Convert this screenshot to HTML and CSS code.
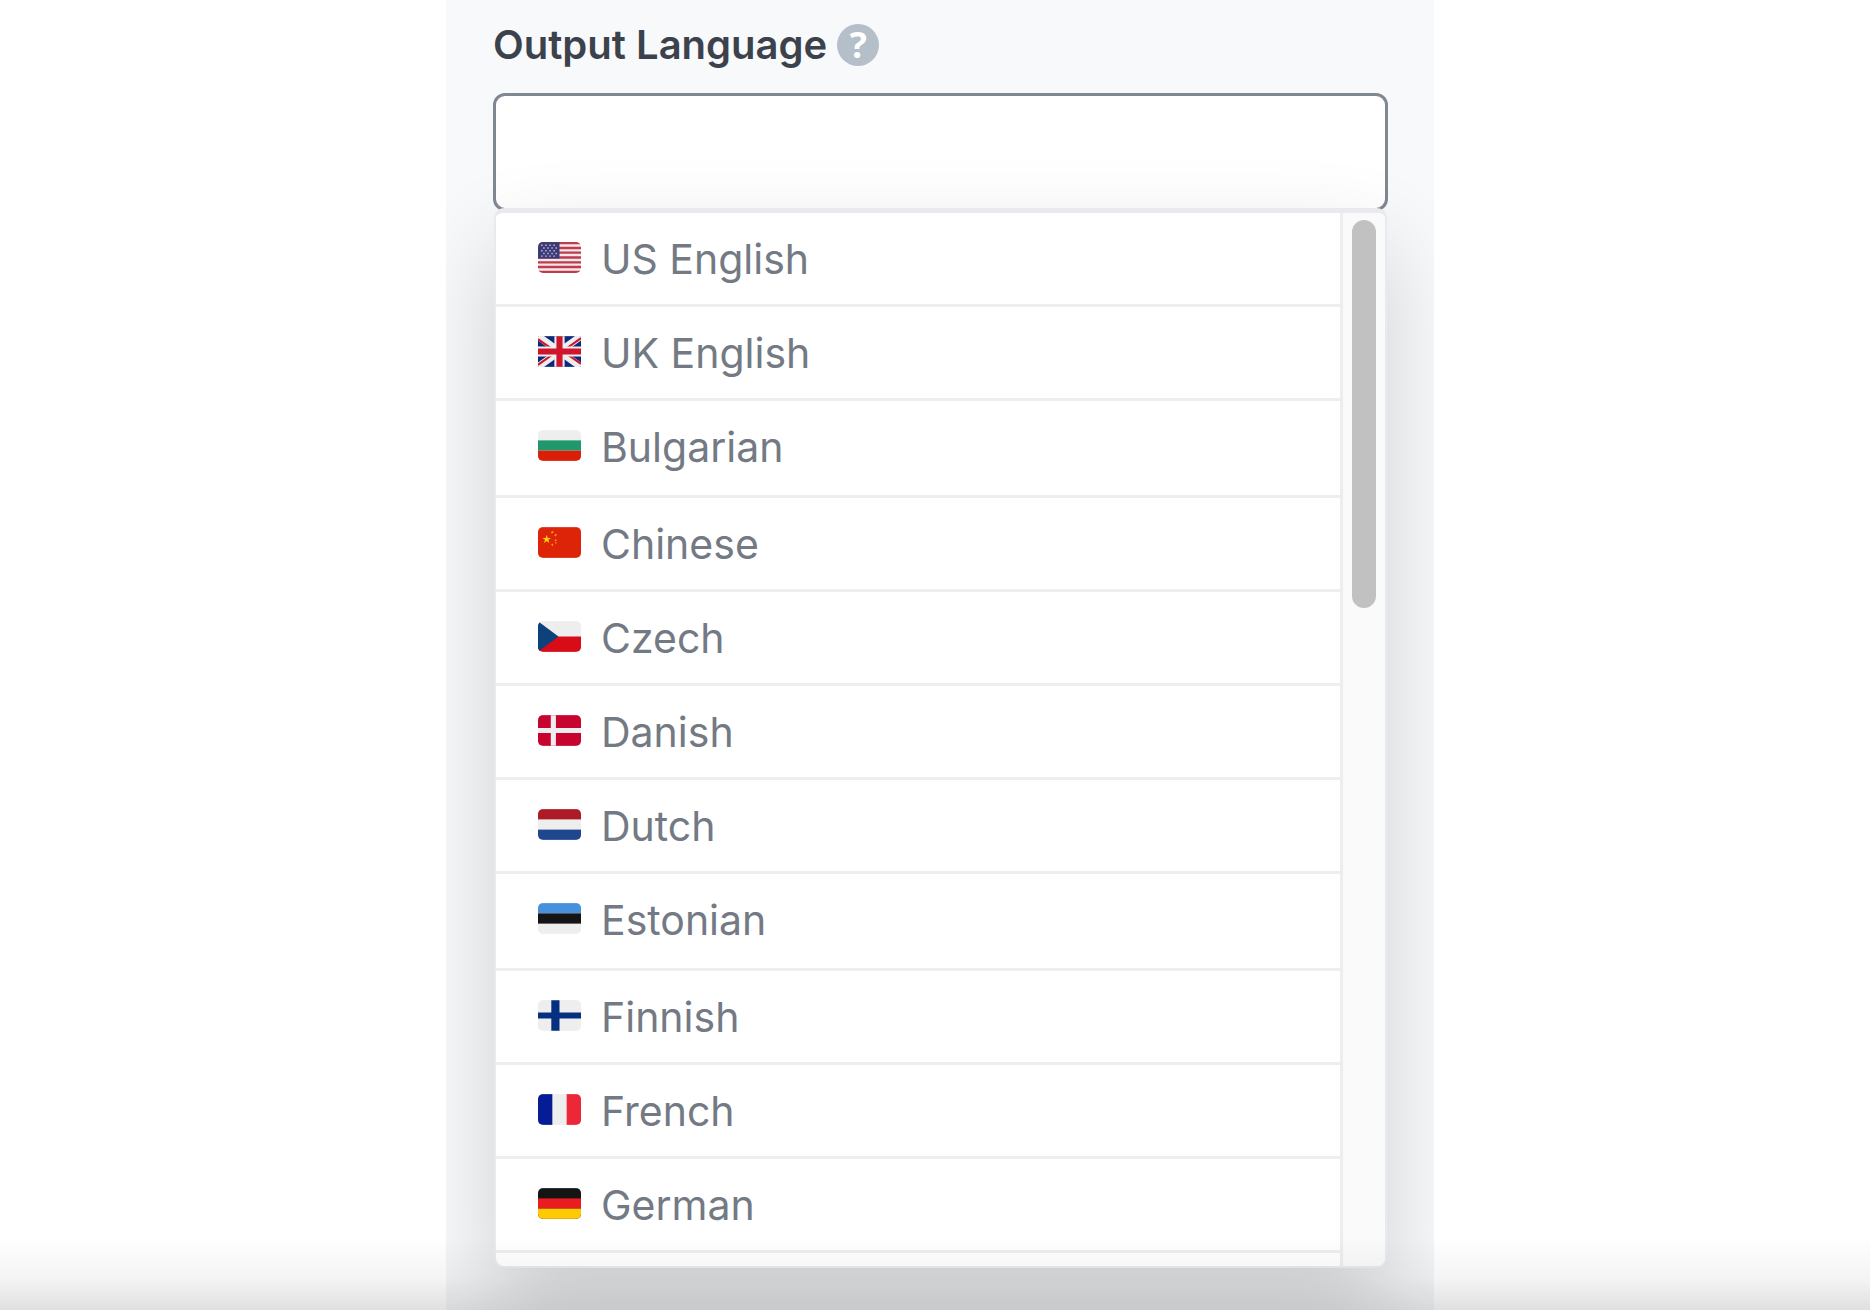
FILE: index.html
```html
<!DOCTYPE html>
<html lang="en">
<head>
<meta charset="utf-8">
<meta name="viewport" content="width=device-width, initial-scale=1">
<title>Output Language</title>
<link rel="stylesheet" href="styles.css">
</head>
<body>
<main class="panel">
  <div class="field-head">
    <label class="field-label" for="language">Output Language</label>
    <button class="help" type="button" aria-label="Help">?</button>
  </div>
  <input class="field-input" id="language" type="text" role="combobox" aria-expanded="true" aria-controls="languages">
  <div class="dropdown">
    <ul class="options" id="languages" role="listbox" aria-label="Languages">
      <li class="option" role="option">
        <svg class="flag" viewBox="0 0 42 30" aria-hidden="true">
          <rect width="42" height="30" fill="#f3e9ea"/>
          <path d="M0 1h42M0 5.7h42M0 10.3h42M0 15h42M0 19.7h42M0 24.3h42M0 29h42" stroke="#bd3d4f" stroke-width="2.3"/>
          <rect width="21" height="16" fill="#3c3b78"/>
          <path d="M3 3h16M5 5.7h14M3 8.4h16M5 11.1h14M3 13.6h16" stroke="#b9b8d3" stroke-width="1.3" stroke-dasharray="1.5 2.5"/>
        </svg>
        <span>US English</span>
      </li>
      <li class="option" role="option">
        <svg class="flag flag-square" viewBox="0 0 42 30" aria-hidden="true">
          <rect width="42" height="30" fill="#0b2a7b"/>
          <path d="M0 0L42 30M42 0L0 30" stroke="#eee" stroke-width="7"/>
          <path d="M0 3L16 14M42 27L26 16M42 2L25 14M0 28L17 16" stroke="#d0142c" stroke-width="2"/>
          <path d="M21 0v30M0 15h42" stroke="#eee" stroke-width="10"/>
          <path d="M21 0v30M0 15h42" stroke="#d0142c" stroke-width="6"/>
        </svg>
        <span>UK English</span>
      </li>
      <li class="option" role="option">
        <svg class="flag" viewBox="0 0 42 30" aria-hidden="true">
          <rect width="42" height="30" fill="#eee"/>
          <rect y="10" width="42" height="10" fill="#20986b"/>
          <rect y="20" width="42" height="10" fill="#d91f08"/>
        </svg>
        <span>Bulgarian</span>
      </li>
      <li class="option" role="option">
        <svg class="flag" viewBox="0 0 42 30" aria-hidden="true">
          <rect width="42" height="30" fill="#de2408"/>
          <path d="M8.500 7.500l1 3h3.200l-2.600 1.900 1 3.100-2.600-1.900-2.600 1.900 1-3.100-2.600-1.900h3.200z" fill="#ffd20a"/>
          <path d="M13 5.500l2-1M16.500 8.500l1.500-1.500M16.500 13l1.500-.5M13.500 16.500l1 1.500M17 15l1 .5" stroke="#f5a30a" stroke-width="1.500"/>
        </svg>
        <span>Chinese</span>
      </li>
      <li class="option" role="option">
        <svg class="flag" viewBox="0 0 42 30" aria-hidden="true">
          <rect width="42" height="30" fill="#eee"/>
          <rect y="15" width="42" height="15" fill="#d80c16"/>
          <path d="M0 0L20 15 0 30z" fill="#0d417c"/>
        </svg>
        <span>Czech</span>
      </li>
      <li class="option" role="option">
        <svg class="flag" viewBox="0 0 42 30" aria-hidden="true">
          <rect width="42" height="30" fill="#c7042f"/>
          <path d="M15 0v30M0 15h42" stroke="#eee" stroke-width="5"/>
        </svg>
        <span>Danish</span>
      </li>
      <li class="option" role="option">
        <svg class="flag" viewBox="0 0 42 30" aria-hidden="true">
          <rect width="42" height="30" fill="#eee"/>
          <rect width="42" height="10" fill="#ad1b27"/>
          <rect y="20" width="42" height="10" fill="#1f4790"/>
        </svg>
        <span>Dutch</span>
      </li>
      <li class="option" role="option">
        <svg class="flag" viewBox="0 0 42 30" aria-hidden="true">
          <rect width="42" height="30" fill="#eee"/>
          <rect width="42" height="10" fill="#4790db"/>
          <rect y="10" width="42" height="10" fill="#141414"/>
        </svg>
        <span>Estonian</span>
      </li>
      <li class="option" role="option">
        <svg class="flag" viewBox="0 0 42 30" aria-hidden="true">
          <rect width="42" height="30" fill="#eee"/>
          <path d="M17 0v30" stroke="#04307f" stroke-width="8"/>
          <path d="M0 15h42" stroke="#04307f" stroke-width="6"/>
        </svg>
        <span>Finnish</span>
      </li>
      <li class="option" role="option">
        <svg class="flag" viewBox="0 0 42 30" aria-hidden="true">
          <rect width="42" height="30" fill="#eee"/>
          <rect width="14" height="30" fill="#051c94"/>
          <rect x="28" width="14" height="30" fill="#ec2738"/>
        </svg>
        <span>French</span>
      </li>
      <li class="option" role="option">
        <svg class="flag" viewBox="0 0 42 30" aria-hidden="true">
          <rect width="42" height="30" fill="#141414"/>
          <rect y="10" width="42" height="10" fill="#eb1c20"/>
          <rect y="20" width="42" height="10" fill="#fdca05"/>
        </svg>
        <span>German</span>
      </li>
    </ul>
    <div class="scroll-track" aria-hidden="true"><div class="scroll-thumb"></div></div>
  </div>
</main>
<div class="page-fade" aria-hidden="true"></div>
</body>
</html>
```
FILE: styles.css
```css
* {
  box-sizing: border-box;
}

body {
  margin: 0;
  min-height: 100vh;
  display: flex;
  justify-content: center;
  background: #fff;
  color: #737a84;
  font-family: Inter, "Liberation Sans", sans-serif;
}

.panel {
  width: 988px;
  max-width: 100%;
  padding: 24px 46px 40px 47px;
  margin-left: 10px;
  overflow: hidden;
  background: #f7f9fb;
}

.field-head {
  display: flex;
  align-items: center;
  gap: 10px;
  height: 42px;
  margin-bottom: 27px;
}

.field-label {
  color: #3c424b;
  font-size: 40px;
  font-weight: 600;
  line-height: 44px;
}

.help {
  width: 42px;
  height: 42px;
  padding: 0;
  border: 0;
  border-radius: 50%;
  background: #b4bfca;
  color: #fff;
  font-family: "Open Sans", sans-serif;
  font-size: 36px;
  font-weight: 700;
  line-height: 42px;
}

.field-input {
  display: block;
  width: 100%;
  height: 118px;
  padding: 0 40px;
  border: 3px solid #808891;
  border-radius: 12px;
  background: #fff;
  color: inherit;
  font: inherit;
  font-size: 41px;
  outline: 0;
}

.dropdown {
  position: relative;
  display: flex;
  margin: -3px 1px 0;
  border: 2px solid #e8eaed;
  border-top-width: 5px;
  border-radius: 10px;
  background: #fff;
  box-shadow: 0 38px 90px rgba(0, 0, 0, 0.165);
  overflow: hidden;
}

.options {
  flex: 1;
  margin: 0;
  padding: 0 0 13px;
  list-style: none;
}

.option {
  display: flex;
  align-items: center;
  gap: 20px;
  height: 94px;
  padding-left: 42px;
  border-bottom: 3px solid #eceef0;
  font-size: 41px;
  line-height: 50px;
}

.option:nth-child(5n + 3) {
  height: 97px;
  padding-bottom: 3px;
}

.flag {
  width: 43px;
  height: 31px;
  margin-bottom: 3px;
  border-radius: 5px;
}

.flag-square {
  border-radius: 1px;
}

.scroll-track {
  width: 45px;
  padding: 7px 9px;
  border-left: 3px solid #ededee;
  background: #fafafa;
}

.scroll-thumb {
  width: 24px;
  height: 388px;
  border-radius: 12px;
  background: #c1c1c1;
}

.page-fade {
  position: fixed;
  inset: auto 0 0;
  height: 74px;
  background: linear-gradient(rgba(0, 0, 0, 0), rgba(0, 0, 0, 0.04) 55%, rgba(0, 0, 0, 0.12));
  pointer-events: none;
}
```
